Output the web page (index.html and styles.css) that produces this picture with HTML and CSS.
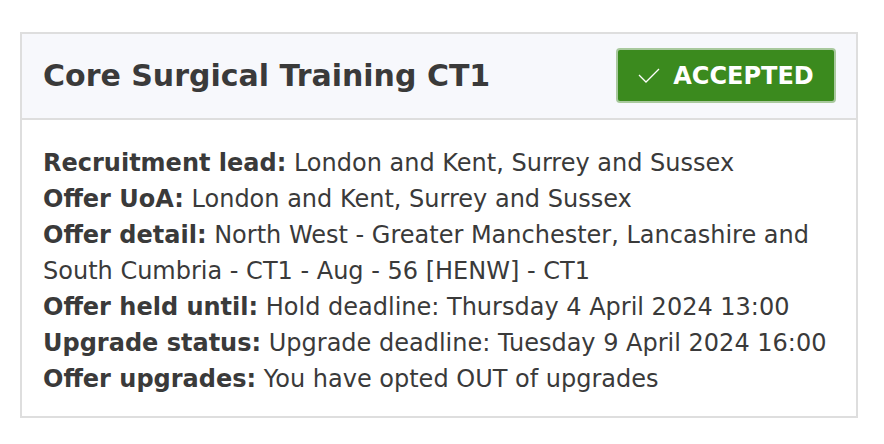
FILE: index.html
```html
<!DOCTYPE html>
<html lang="en">
<head>
  <meta charset="UTF-8"/>
  <title>Offer</title>
  <link rel="stylesheet" href="styles.css">
</head>
<body>
  <div class="offer-card">
    <div class="offer-header">
      <h2>Core Surgical Training CT1</h2>
      <span class="status-badge">
        <svg width="22" height="15" viewBox="0 0 22 15"><path d="M1 7 L8 14 L21 1" fill="none" stroke="#fff" stroke-width="1.3"/></svg>
        ACCEPTED
      </span>
    </div>
    <div class="offer-body">
      <p><strong>Recruitment lead:</strong> London and Kent, Surrey and Sussex</p>
      <p><strong>Offer UoA:</strong> London and Kent, Surrey and Sussex</p>
      <p><strong>Offer detail:</strong> North West - Greater Manchester, Lancashire and South Cumbria - CT1 - Aug - 56 [HENW] - CT1</p>
      <p><strong>Offer held until:</strong> Hold deadline: Thursday 4 April 2024 13:00</p>
      <p><strong>Upgrade status:</strong> Upgrade deadline: Tuesday 9 April 2024 16:00</p>
      <p><strong>Offer upgrades:</strong> You have opted OUT of upgrades</p>
    </div>
  </div>
</body>
</html>
```

FILE: styles.css
```css
body {
  margin: 0;
  padding: 32px 26px 0 20px;
  background: #fff;
  font-family: "DejaVu Sans", Verdana, sans-serif;
  color: #3a3a3a;
}

.offer-card {
  border: 2px solid #dedede;
  background: #fff;
}

.offer-header {
  display: flex;
  justify-content: space-between;
  align-items: center;
  background: #f7f8fc;
  border-bottom: 2px solid #dedede;
  padding: 14px 20px 15px 21px;
  height: 55px;
}

.offer-header h2 {
  margin: 0;
  font-size: 30px;
  font-weight: bold;
  color: #3a3a3a;
}

.status-badge {
  display: flex;
  align-items: center;
  gap: 13px;
  box-sizing: border-box;
  height: 55px;
  width: 220px;
  justify-content: center;
  background: #3b8a1e;
  border: 2px solid #a9c99e;
  border-radius: 4px;
  color: #fff;
  font-size: 24px;
  font-weight: bold;
}

.offer-body {
  padding: 25px 21px 19px 21px;
  font-size: 24px;
  line-height: 36px;
}

.offer-body p {
  margin: 0;
}
```
